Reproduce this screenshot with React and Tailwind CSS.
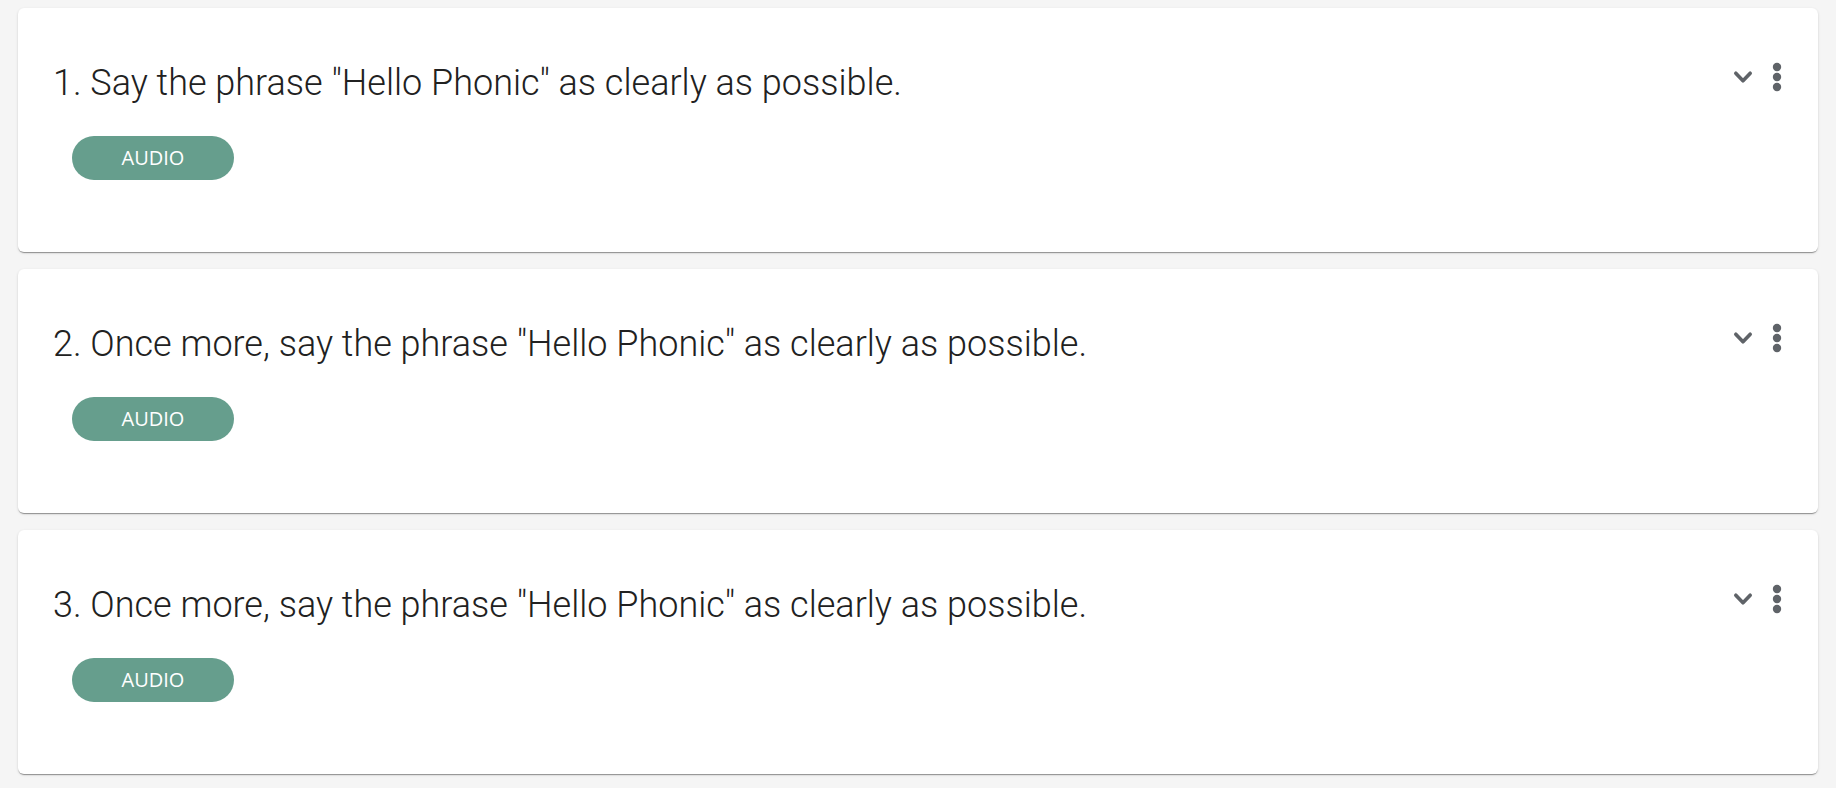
import React from 'react';

const questions = [
  '1. Say the phrase "Hello Phonic" as clearly as possible.',
  '2. Once more, say the phrase "Hello Phonic" as clearly as possible.',
  '3. Once more, say the phrase "Hello Phonic" as clearly as possible.',
];

const ChevronDown = () => (
  <svg width="20" height="15" viewBox="0 0 20 15" className="text-[#5f6368]">
    <path d="M2.8 3.2 L10 10.8 L17.2 3.2" fill="none" stroke="currentColor" strokeWidth="3.6" strokeLinecap="round" strokeLinejoin="round" />
  </svg>
);

const MoreVert = () => (
  <svg width="12" height="32" viewBox="0 0 12 32" className="text-[#5f6368]">
    <circle cx="6" cy="6" r="4.2" fill="currentColor" />
    <circle cx="6" cy="16" r="4.2" fill="currentColor" />
    <circle cx="6" cy="26" r="4.2" fill="currentColor" />
  </svg>
);

const QuestionCard = ({ text }) => (
  <div className="h-[244px] bg-white rounded-[6px] shadow-[0_2px_1px_-1px_rgba(0,0,0,0.25),0_1px_1px_0_rgba(0,0,0,0.14),0_1px_3px_0_rgba(0,0,0,0.12)]">
    <div className="flex items-start pl-[35px] pr-[35px]">
      <h2 className="flex-1 pt-[57px] text-[36px] leading-[36px] font-light text-[#212121] font-['Roboto',sans-serif]">
        {text}
      </h2>
      <div className="flex items-center gap-[18px] pt-[53px]">
        <ChevronDown />
        <MoreVert />
      </div>
    </div>
    <div className="pl-[54px] mt-[35px]">
      <button className="w-[162px] h-[44px] rounded-full bg-[#669e8d] text-white text-[20px] font-['Open_Sans',sans-serif]">
        AUDIO
      </button>
    </div>
  </div>
);

export default function App() {
  return (
    <div className="min-h-screen bg-[#f5f5f5] px-[18px] pt-[8px] pb-[12px]">
      <div className="flex flex-col gap-[17px]">
        {questions.map((q) => (
          <QuestionCard key={q} text={q} />
        ))}
      </div>
    </div>
  );
}
